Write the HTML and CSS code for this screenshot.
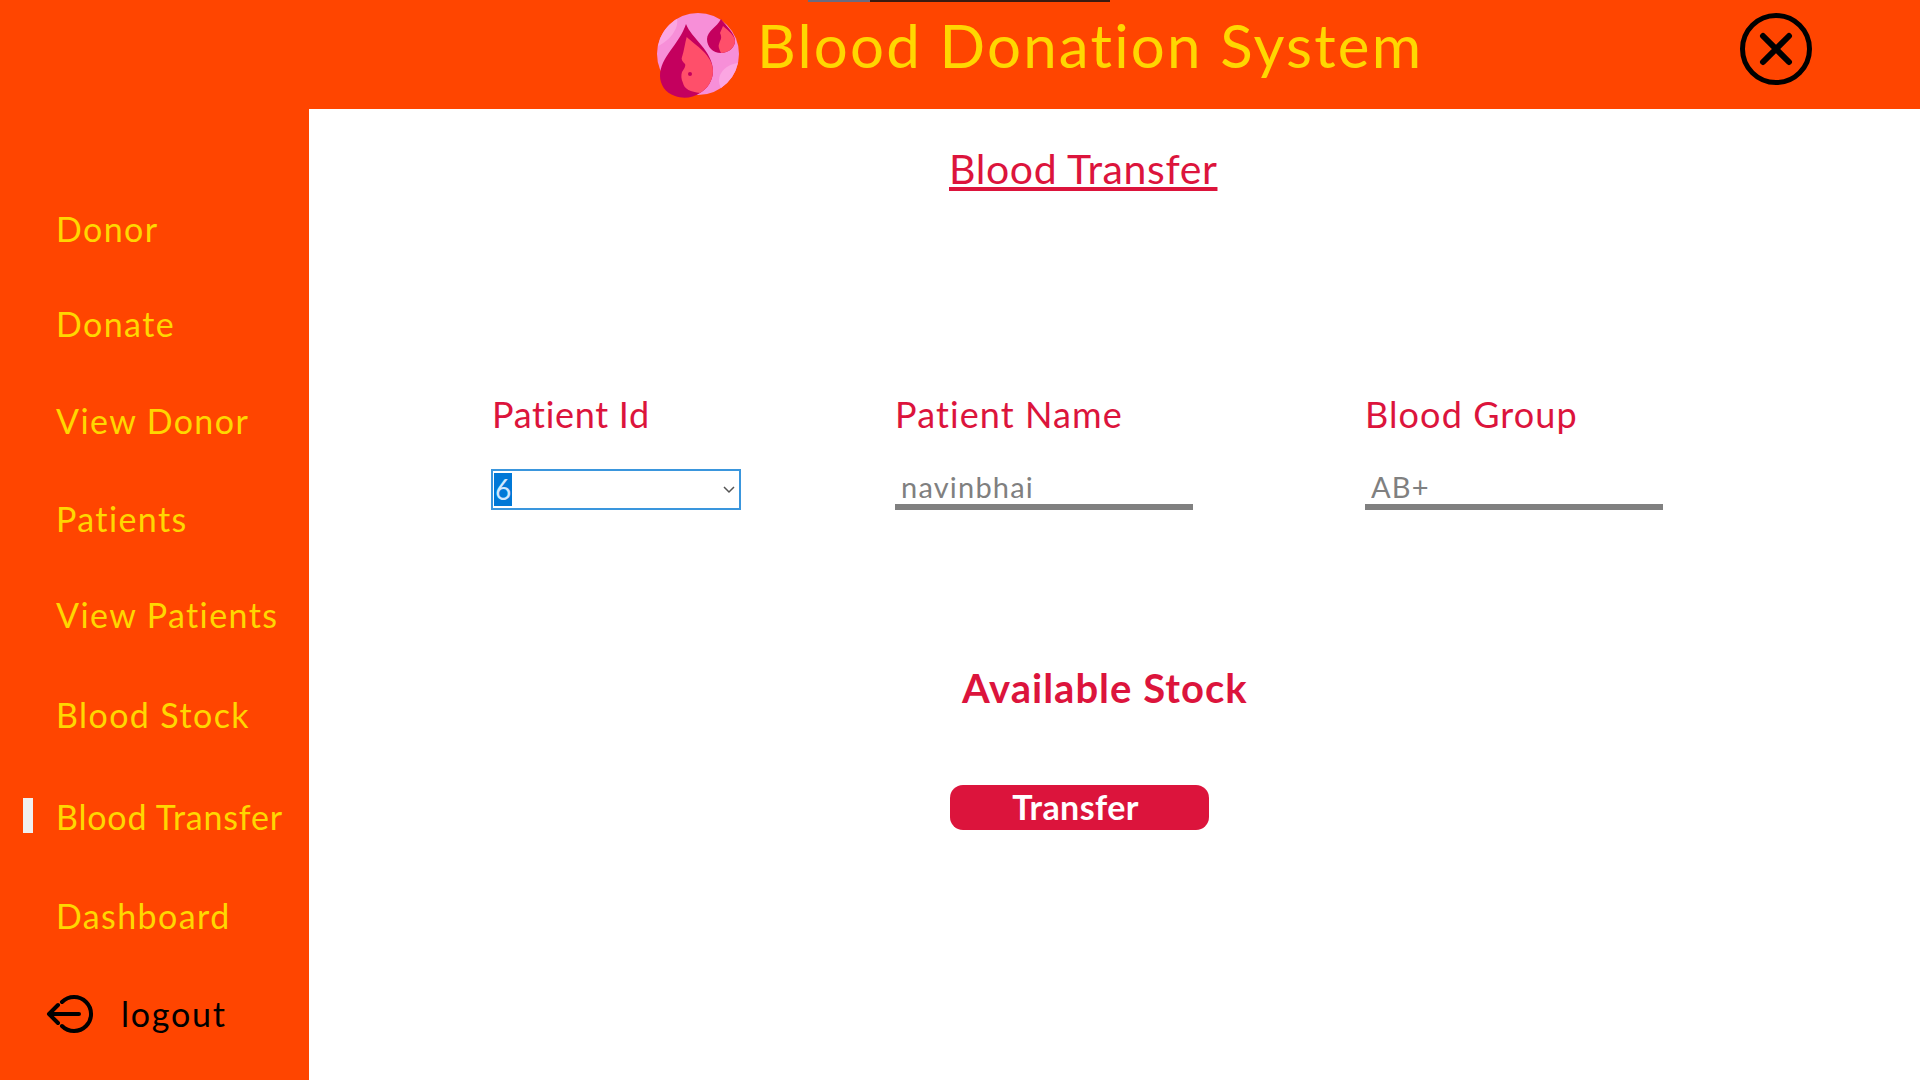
FILE: index.html
```html
<!DOCTYPE html>
<html lang="en">
<head>
  <meta charset="UTF-8"/>
  <title>Blood Donation System</title>
  <link rel="stylesheet" href="styles.css">
</head>
<body>
  <div class="top-sliver"><span class="sliver-grey"></span><span class="sliver-dark"></span></div>
  <header class="header">
    <svg class="logo" width="90" height="90" viewBox="0 0 90 90">
      <circle cx="43" cy="43" r="41" fill="#f78fd8"/>
      <path d="M83 52A41 41 0 0 1 66 77C60 66 68 54 83 52Z" fill="#fba6e2"/>
      <path d="M3 35A41 41 0 0 1 22 8C24 18 14 30 3 35Z" fill="#fba6e2"/>
      <path d="M31 13C36 27 58 40 58 60C58 70 52 78 45 82C38 87 28 88 20 85C10 82 5 73 5 65C5 46 24 34 31 13Z" fill="#c4005e"/>
      <path d="M31.7 26C40 34 58 44 58 60C58 70 52 78 45 82C36 81 29 78 28 72C26 68 26 64 27 61C29 58 31 55 30 53C27 50 26 48 27 46C29 40 30 32 31.7 26Z" fill="#ff4f6a"/>
      <circle cx="35" cy="63" r="2" fill="#c4005e"/>
      <path d="M66 8C70 14 80 22 80 30C80 37 73 42 66 42C58 42 52 36 52 28C52 20 62 16 66 8Z" fill="#c4005e"/>
      <path d="M68 15C74 20 80 25 80 30C80 37 73 42 66 42C64 38 63 35 64 33L65 30C67 27 66 24 65 22Z" fill="#ff4f6a"/>
    </svg>
    <h1 class="app-title">Blood Donation System</h1>
    <svg class="close-icon" width="74" height="74" viewBox="0 0 74 74">
      <circle cx="37" cy="37" r="33.5" fill="none" stroke="#000" stroke-width="5"/>
      <path d="M24 24L50 50M50 24L24 50" fill="none" stroke="#000" stroke-width="6" stroke-linecap="round"/>
    </svg>
  </header>
  <div class="layout">
    <nav class="sidebar">
      <a class="nav-item">Donor</a>
      <a class="nav-item">Donate</a>
      <a class="nav-item">View Donor</a>
      <a class="nav-item">Patients</a>
      <a class="nav-item">View Patients</a>
      <a class="nav-item">Blood Stock</a>
      <a class="nav-item active">Blood Transfer</a>
      <a class="nav-item">Dashboard</a>
      <a class="nav-item logout">
        <svg class="logout-icon" width="50" height="40" viewBox="0 0 50 40">
          <path d="M16 8A17 17 0 1 1 16 32" fill="none" stroke="#000" stroke-width="4" stroke-linecap="round"/>
          <path d="M3 20H33M12 11L3 20L12 29" fill="none" stroke="#000" stroke-width="4" stroke-linecap="round" stroke-linejoin="round"/>
        </svg>
        logout
      </a>
    </nav>
    <main class="content">
      <h2 class="page-title">Blood Transfer</h2>
      <div class="fields">
        <div class="field">
          <label class="field-label first">Patient Id</label>
          <div class="combo"><span class="combo-value">6</span>
            <svg class="combo-arrow" width="12" height="8" viewBox="0 0 12 8"><path d="M1 1L6 6L11 1" fill="none" stroke="#555" stroke-width="1.5"/></svg>
          </div>
        </div>
        <div class="field">
          <label class="field-label">Patient Name</label>
          <input class="line-input" value="navinbhai" readonly>
        </div>
        <div class="field">
          <label class="field-label">Blood Group</label>
          <input class="line-input" value="AB+" readonly>
        </div>
      </div>
      <h3 class="stock-title">Available Stock</h3>
      <button class="transfer-btn">Transfer</button>
    </main>
  </div>
</body>
</html>
```

FILE: styles.css
```css
*, *::before, *::after { box-sizing: border-box; margin:0; padding:0 }
html, body { height:100%; overflow:hidden }
body {
  font-family:'Lato','Liberation Sans',sans-serif;
  background:#fff;
  position:relative;
}
.top-sliver {
  position:absolute; top:0; left:808px;
  display:flex;
  height:2px;
}
.sliver-grey { width:62px; background:#6b6b80; }
.sliver-dark { width:240px; background:#3a1a10; }

.header {
  height:109px;
  background:#ff4500;
  display:flex; align-items:center;
  padding-left:655px;
  padding-right:107px;
}
.logo { margin-top:2px; flex:none; }
.app-title {
  margin-left:12px;
  margin-top:-20px;
  font-size:60px; font-weight:400;
  letter-spacing:2.2px;
  color:#ffd700;
}
.close-icon { margin-left:auto; margin-top:-12px; flex:none; }

.layout { display:flex; height:971px; }
.sidebar {
  width:309px;
  background:#ff4500;
  padding:100px 0 0 56px;
  display:grid;
  grid-template-rows:95px 97px 98px 96px 100px 102px 99px 98px auto;
  align-items:start;
}
.nav-item {
  position:relative;
  font-size:34px;
  line-height:40px;
  letter-spacing:1.4px;
  color:#ffd700;
  white-space:nowrap;
}
.nav-item.active { letter-spacing:.8px; }
.nav-item.active::before {
  content:'';
  position:absolute; left:-33px; top:1px;
  width:10px; height:35px;
  background:#f0f0f0;
}
.logout {
  display:flex; align-items:center; gap:25px;
  margin-left:-10px;
  letter-spacing:1.8px;
  color:#000;
}

.content { flex:1; background:#fff; }
.page-title {
  margin:38px 0 0 640px;
  font-size:41px; font-weight:400;
  line-height:44px;
  letter-spacing:.6px;
  color:#dc143c;
  text-decoration:underline;
}
.fields {
  display:grid;
  grid-template-columns:404px 470px 298px;
  margin:203px 0 0 182px;
}
.field-label {
  display:block;
  font-size:36px;
  line-height:40px;
  letter-spacing:1.1px;
  color:#dc143c;
}
.field-label.first { padding-left:1px; letter-spacing:.7px; }
.combo {
  width:250px; height:41px;
  margin-top:35px;
  border:2px solid #3a96dd;
  display:flex; align-items:center; justify-content:space-between;
  padding:0 4px 0 1px;
  background:#fff;
}
.combo-value {
  background:#0078d7;
  color:#cfe8ff;
  font-size:28px;
  line-height:33px;
  padding:0 1px;
}
.line-input {
  display:block;
  width:298px; height:41px;
  margin-top:35px;
  border:none;
  border-bottom:6px solid #808080;
  background:transparent;
  padding:0 6px;
  font-family:inherit;
  font-size:29px;
  letter-spacing:1.2px;
  color:#808080;
  outline:none;
}
.stock-title {
  margin:155px 0 0 653px;
  font-size:40px; font-weight:700;
  line-height:46px;
  letter-spacing:1px;
  color:#dc143c;
}
.transfer-btn {
  display:block;
  width:259px; height:45px;
  margin:74px 0 0 641px;
  border:none;
  border-radius:13px;
  padding:0 8px 2px 0;
  background:#dc143c;
  color:#fff;
  font-family:inherit;
  font-size:34px; font-weight:700;
  letter-spacing:.4px;
  cursor:pointer;
}
```
